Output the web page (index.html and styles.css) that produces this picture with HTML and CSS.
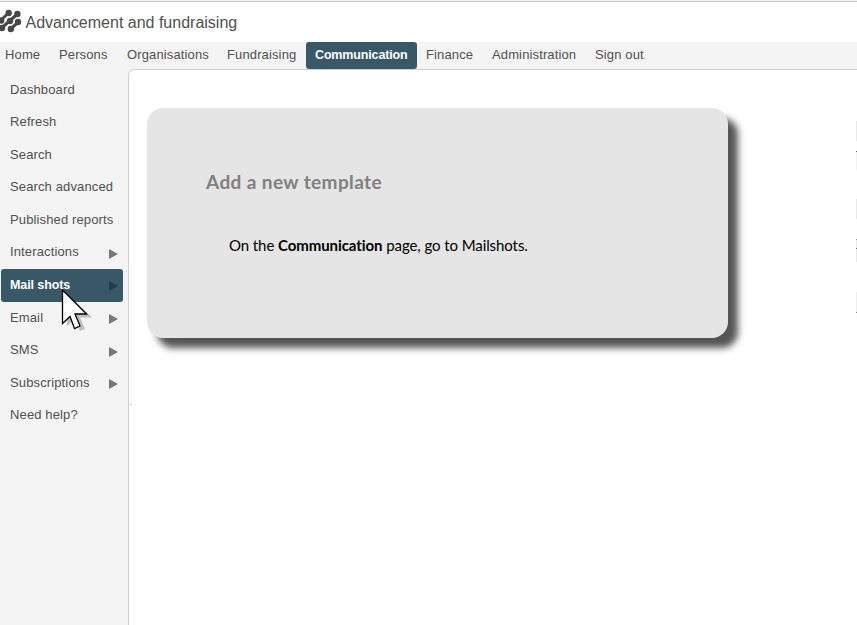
FILE: index.html
```html
<!DOCTYPE html>
<html lang="en">
<head>
<meta charset="utf-8">
<title>Advancement and fundraising</title>
<link rel="stylesheet" href="styles.css">
</head>
<body>
<header class="brand">
  <svg class="logo" width="22" height="24" viewBox="0 0 22 24">
    <g stroke="#484848" stroke-width="3" fill="none">
      <path d="M0 12L8.500 4M1.500 19L17.500 5M10.500 20L18.500 13"/>
    </g>
    <g fill="#484848">
      <circle cx="8.700" cy="4" r="3.200"/><circle cx="17.400" cy="5" r="3.200"/>
      <circle cx="1.200" cy="11.500" r="3.200"/><circle cx="10" cy="12" r="3.200"/><circle cx="18" cy="13" r="3.200"/>
      <circle cx="2" cy="19" r="3.200"/><circle cx="10.800" cy="20" r="3.200"/>
    </g>
  </svg>
  <h1 class="title">Advancement and fundraising</h1>
</header>
<nav class="topnav">
  <a class="tab home">Home</a><a class="tab persons">Persons</a><a class="tab orgs">Organisations</a><a class="tab fund">Fundraising</a><a class="tab comm active">Communication</a><a class="tab finance">Finance</a><a class="tab admin">Administration</a><a class="tab signout">Sign out</a>
</nav>
<div class="layout">
  <aside class="side">
    <a class="item">Dashboard</a>
    <a class="item">Refresh</a>
    <a class="item">Search</a>
    <a class="item">Search advanced</a>
    <a class="item">Published reports</a>
    <a class="item more">Interactions</a>
    <a class="item more selected">Mail shots</a>
    <a class="item more">Email</a>
    <a class="item more">SMS</a>
    <a class="item more">Subscriptions</a>
    <a class="item">Need help?</a>
  </aside>
  <main class="content">
    <section class="card">
      <h2 class="heading">Add a new template</h2>
      <p class="step">On the <b>Communication</b> page, go to Mailshots.</p>
    </section>
  </main>
</div>
<div class="flyout-edge"></div>
<div class="edge"></div>
<svg class="cursor" width="32" height="44" viewBox="0 0 32 44">
  <path transform="translate(5 3)" fill="#000" opacity=".22" d="M1 1V34L9 27L14 39L19 37L14 25.500H26Z"/>
  <path fill="#fff" stroke="#000" stroke-width="1.300" d="M1.500 1V34.500L9 27.500L13.500 39.500L19 37L14 25H25.500Z"/>
</svg>
</body>
</html>
```
FILE: styles.css
```css
* { box-sizing: border-box; }
body {
  margin: 0;
  height: 625px;
  overflow: hidden;
  display: flex;
  flex-direction: column;
  position: relative;
  background: #f4f4f4;
  color: #505050;
  font: 13px "Liberation Sans", Arial, sans-serif;
}
.brand {
  height: 41px;
  margin-top: 1px;
  flex: none;
  display: flex;
  align-items: flex-start;
  background: #fff;
  border-top: 1px solid #ccc;
}
.logo { margin-top: 7px; flex: none; }
.title { margin: 11px 0 0 3.5px; font-size: 16px; line-height: 20px; font-weight: 400; letter-spacing: 0; white-space: nowrap; }
.topnav { flex: none; height: 27px; display: flex; }
.tab { height: 27px; line-height: 25px; padding-left: 9px; letter-spacing: .13px; white-space: nowrap; border-radius: 3px; }
.home { width: 50px; padding-left: 5px; }
.persons { width: 68px; }
.orgs { width: 100px; }
.fund { width: 88px; }
.comm { width: 111px; }
.finance { width: 66px; }
.admin { width: 103px; }
.signout { width: 80px; }
.active { background: #395867; color: #fff; font-weight: 700; font-size: 12.5px; line-height: 27px; letter-spacing: -.15px; }
.layout { flex: 1; min-height: 0; display: flex; }
.side { width: 128px; padding: 4.5px 5px 0 1px; flex: none; }
.item { display: flex; justify-content: space-between; height: 32.6px; line-height: 32px; padding: 0 5px 0 9px; border-radius: 3px; letter-spacing: .13px; white-space: nowrap; }
.more::after { content: ""; align-self: center; margin-top: 2px; border-left: 9px solid #777; border-top: 5px solid transparent; border-bottom: 5px solid transparent; }
.selected { background: #395867; color: #fff; font-weight: 700; font-size: 12.5px; letter-spacing: -.1px; }
.selected::after { border-left-color: #223c49; }
.content { flex: 1; padding: 38px 0 0 18px; background: #fff; border: 1px solid #d0d0d0; border-right: 0; border-bottom: 0; border-top-left-radius: 6px; }
.card { width: 581px; height: 230px; padding: 61px 59px; background: #e5e5e5; border-radius: 16px; box-shadow: 10px 10px 7px #555; font-family: Lato, sans-serif; }
.heading { margin: 0; font-size: 19px; line-height: 26px; letter-spacing: .4px; color: #808080; white-space: nowrap; }
.step { margin: 38px 0 0 23px; font-size: 15px; line-height: 24px; letter-spacing: -.08px; color: #000; white-space: nowrap; }
.flyout-edge { position: absolute; left: 130px; top: 266px; width: 2px; height: 139px; border-right: 1px solid #f7f7f7; border-bottom: 1px solid #bbb; }
.edge {
  position: absolute; right: 0; top: 121px; width: 1px; height: 193px;
  background: linear-gradient(#e8e8e8 20px, #fff 20px 30px, #666 30px 31px, #f2f2f2 31px 49px, #fff 49px 78px, #e8e8e8 78px 98px, #fff 98px 118px, #999 118px 119px, #e8e8e8 119px 127px, #777 127px 128px, #e8e8e8 128px 141px, #fff 141px 171px, #eee 171px 191px, #888 191px 192px, #fff 192px);
}
.cursor { position: absolute; left: 61px; top: 289px; }
```
